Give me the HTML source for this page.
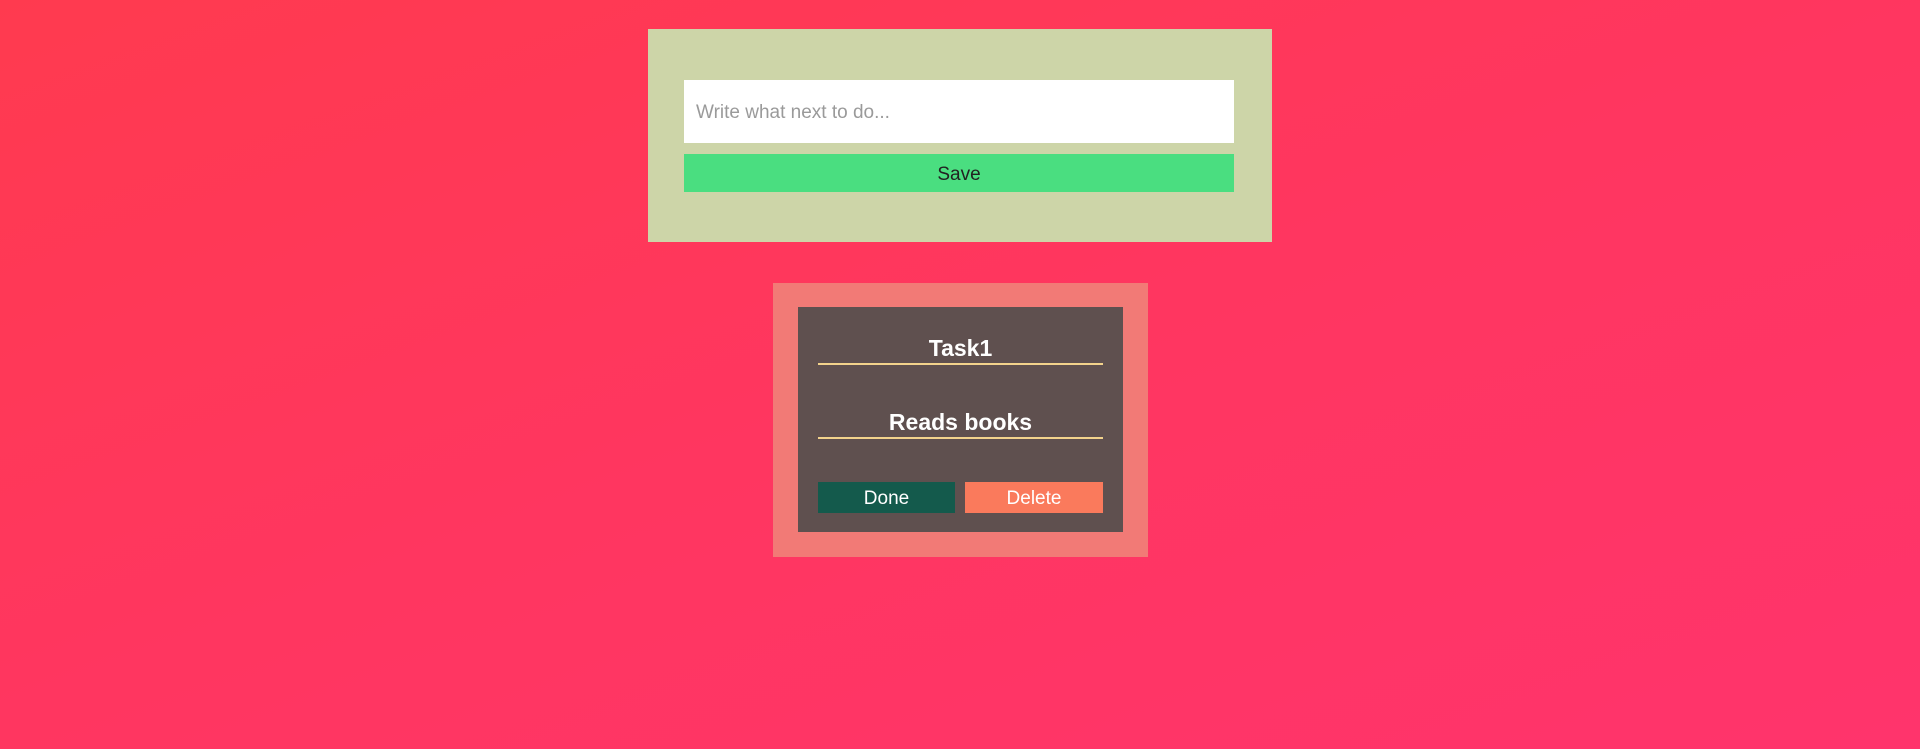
<!DOCTYPE html>
<html><head><style>
html,body{margin:0;padding:0;width:1920px;height:749px;overflow:hidden}
body{background:linear-gradient(160deg,#ff3a4f 0%,#ff3660 50%,#ff346c 100%);font-family:"Liberation Sans",sans-serif;position:relative}
.a{position:absolute;box-sizing:border-box}
</style></head><body>
<div class="a" style="left:648px;top:29px;width:624px;height:213px;background:#cdd5a8"></div>
<div class="a" style="left:684px;top:80px;width:550px;height:63px;background:#fff;color:#9a9a9a;font-size:19px;line-height:66px;padding-left:12px">Write what next to do...</div>
<div class="a" style="left:684px;top:154px;width:550px;height:38px;background:#4ade80;color:#222;font-size:19px;line-height:41px;text-align:center">Save</div>
<div class="a" style="left:773px;top:283px;width:375px;height:274px;background:#f27a76"></div>
<div class="a" style="left:798px;top:307px;width:325px;height:225px;background:#5f504f"></div>
<div class="a" style="left:818px;top:331px;width:285px;text-align:center;color:#fff;font-weight:bold;font-size:23px;line-height:34px">Task1</div>
<div class="a" style="left:818px;top:363px;width:285px;height:2px;background:#f3d38c"></div>
<div class="a" style="left:818px;top:405px;width:285px;text-align:center;color:#fff;font-weight:bold;font-size:23px;line-height:34px">Reads books</div>
<div class="a" style="left:818px;top:437px;width:285px;height:2px;background:#f3d38c"></div>
<div class="a" style="left:818px;top:482px;width:137px;height:31px;background:#145a4c;color:#fff;font-size:19px;line-height:34px;text-align:center">Done</div>
<div class="a" style="left:965px;top:482px;width:138px;height:31px;background:#fa7a5c;color:#fff;font-size:19px;line-height:34px;text-align:center">Delete</div>
</body></html>
